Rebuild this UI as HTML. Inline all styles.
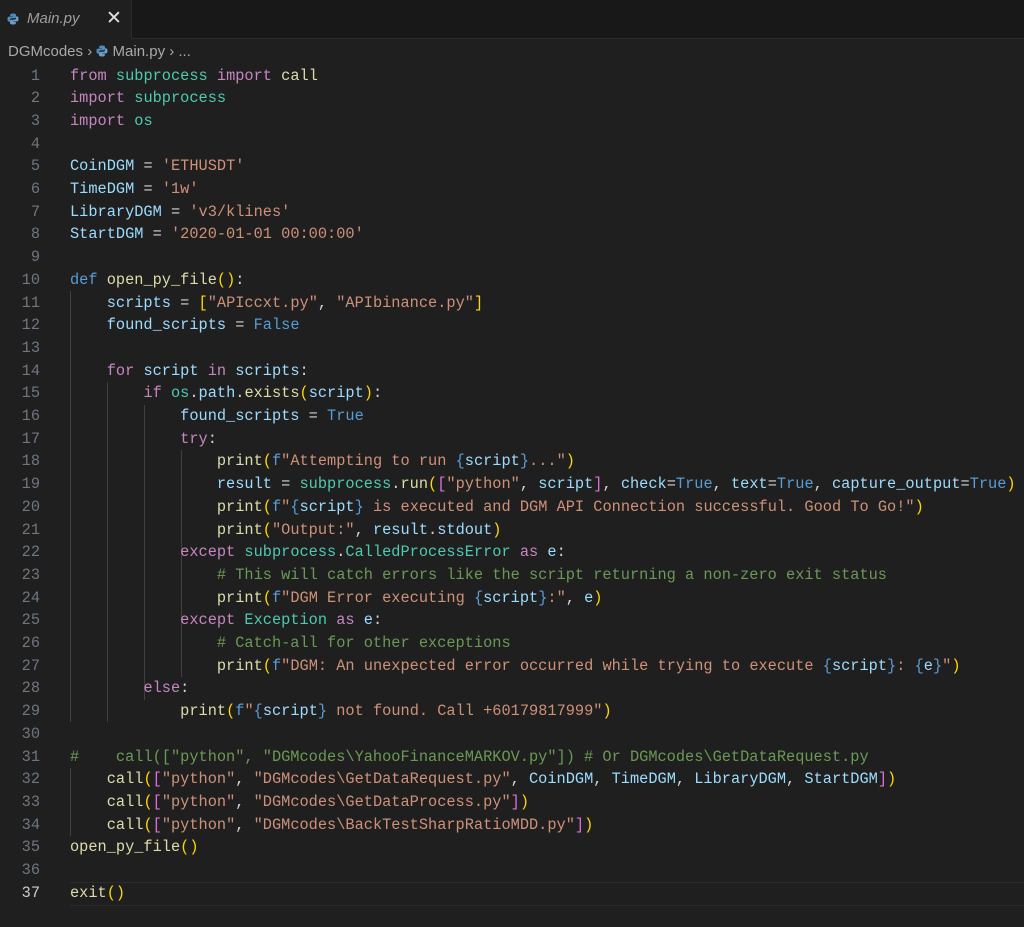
<!DOCTYPE html>
<html><head><meta charset="utf-8"><style>
body{margin:0;width:1024px;height:926px;background:#1f1f1f;overflow:hidden;font-family:"Liberation Sans",sans-serif;position:relative}
.tabbar{position:absolute;left:0;top:0;width:1024px;height:38px;background:#181818;border-bottom:1px solid #2b2b2b}
.tab{position:absolute;left:0;top:0;width:131px;height:39px;background:#1f1f1f;border-right:1px solid #2b2b2b}
.tab .n{position:absolute;left:27px;top:10px;font-size:15px;font-style:italic;color:#9d9d9d}
.tab .x{position:absolute;left:106px;top:7px;font-size:19px;color:#e0e0e0}
.crumb{position:absolute;left:8px;top:43px;font-size:15px;color:#a9a9a9}
.py{display:inline-block;width:12px;height:12px;position:relative;vertical-align:-1px}
.code{position:absolute;left:0;top:64.6px;font-family:"Liberation Mono",monospace;font-size:15.3px;line-height:22.7px;white-space:pre;color:#d4d4d4}
.ln{position:absolute;left:0;width:40px;text-align:right;color:#6e7681}
.l{position:absolute;left:70px}
.k{color:#c586c0}.b{color:#569cd6}.t{color:#4ec9b0}.f{color:#dcdcaa}.v{color:#9cdcfe}.s{color:#ce9178}.c{color:#6a9955}.y{color:#ffd700}.p{color:#da70d6}.q{color:#179fff}
.g{position:absolute;width:1px;background:#404040}
.cur{position:absolute;left:70px;top:881.5px;width:954px;height:22px;border-top:1px solid #2a2a2a;border-bottom:1px solid #2a2a2a}
</style></head><body>
<div class="tabbar"><div class="tab"><svg class="py" style="position:absolute;left:7px;top:13px" viewBox="0 0 12 12"><path d="M6 0.5C3 0.5 3.2 1.8 3.2 1.8V3.2H6.1V3.6H2C0.6 3.6 0.5 5 0.5 6.2S0.8 8.6 2 8.6H3V7.1C3 5.8 4 5.2 5 5.2H7.8C8.8 5.2 9 4.5 9 3.8V1.9C9 1 8 0.5 6 0.5Z" fill="#4b8bbe"/><path d="M6 11.5C9 11.5 8.8 10.2 8.8 10.2V8.8H5.9V8.4H10C11.4 8.4 11.5 7 11.5 5.8S11.2 3.4 10 3.4H9V4.9C9 6.2 8 6.8 7 6.8H4.2C3.2 6.8 3 7.5 3 8.2V10.1C3 11 4 11.5 6 11.5Z" fill="#6c9ec9"/></svg><span class="n">Main.py</span><span class="x">✕</span></div></div>
<div class="crumb">DGMcodes <span style="color:#a9a9a9">›</span> <svg class="py" viewBox="0 0 12 12"><path d="M6 0.5C3 0.5 3.2 1.8 3.2 1.8V3.2H6.1V3.6H2C0.6 3.6 0.5 5 0.5 6.2S0.8 8.6 2 8.6H3V7.1C3 5.8 4 5.2 5 5.2H7.8C8.8 5.2 9 4.5 9 3.8V1.9C9 1 8 0.5 6 0.5Z" fill="#4b8bbe"/><path d="M6 11.5C9 11.5 8.8 10.2 8.8 10.2V8.8H5.9V8.4H10C11.4 8.4 11.5 7 11.5 5.8S11.2 3.4 10 3.4H9V4.9C9 6.2 8 6.8 7 6.8H4.2C3.2 6.8 3 7.5 3 8.2V10.1C3 11 4 11.5 6 11.5Z" fill="#6c9ec9"/></svg> Main.py › ...</div>
<div class="cur"></div>
<!-- indent guides -->
<div class="g" style="left:70px;top:291px;height:431px"></div>
<div class="g" style="left:107px;top:382px;height:340px"></div>
<div class="g" style="left:144px;top:405px;height:295px"></div>
<div class="g" style="left:181px;top:450px;height:227px"></div>
<div class="g" style="left:144px;top:722px;height:0"></div>
<div class="g" style="left:70px;top:768px;height:68px"></div>
<div class="code">
<div class="ln" style="top:0">1</div><div class="l" style="top:0"><span class="k">from</span> <span class="t">subprocess</span> <span class="k">import</span> <span class="f">call</span></div>
<div class="ln" style="top:22.7px">2</div><div class="l" style="top:22.7px"><span class="k">import</span> <span class="t">subprocess</span></div>
<div class="ln" style="top:45.4px">3</div><div class="l" style="top:45.4px"><span class="k">import</span> <span class="t">os</span></div>
<div class="ln" style="top:68.1px">4</div>
<div class="ln" style="top:90.8px">5</div><div class="l" style="top:90.8px"><span class="v">CoinDGM</span> = <span class="s">'ETHUSDT'</span></div>
<div class="ln" style="top:113.5px">6</div><div class="l" style="top:113.5px"><span class="v">TimeDGM</span> = <span class="s">'1w'</span></div>
<div class="ln" style="top:136.2px">7</div><div class="l" style="top:136.2px"><span class="v">LibraryDGM</span> = <span class="s">'v3/klines'</span></div>
<div class="ln" style="top:158.9px">8</div><div class="l" style="top:158.9px"><span class="v">StartDGM</span> = <span class="s">'2020-01-01 00:00:00'</span></div>
<div class="ln" style="top:181.6px">9</div>
<div class="ln" style="top:204.3px">10</div><div class="l" style="top:204.3px"><span class="b">def</span> <span class="f">open_py_file</span><span class="y">()</span>:</div>
<div class="ln" style="top:227px">11</div><div class="l" style="top:227px">    <span class="v">scripts</span> = <span class="y">[</span><span class="s">"APIccxt.py"</span>, <span class="s">"APIbinance.py"</span><span class="y">]</span></div>
<div class="ln" style="top:249.7px">12</div><div class="l" style="top:249.7px">    <span class="v">found_scripts</span> = <span class="b">False</span></div>
<div class="ln" style="top:272.4px">13</div>
<div class="ln" style="top:295.1px">14</div><div class="l" style="top:295.1px">    <span class="k">for</span> <span class="v">script</span> <span class="k">in</span> <span class="v">scripts</span>:</div>
<div class="ln" style="top:317.8px">15</div><div class="l" style="top:317.8px">        <span class="k">if</span> <span class="t">os</span>.<span class="v">path</span>.<span class="f">exists</span><span class="y">(</span><span class="v">script</span><span class="y">)</span>:</div>
<div class="ln" style="top:340.5px">16</div><div class="l" style="top:340.5px">            <span class="v">found_scripts</span> = <span class="b">True</span></div>
<div class="ln" style="top:363.2px">17</div><div class="l" style="top:363.2px">            <span class="k">try</span>:</div>
<div class="ln" style="top:385.9px">18</div><div class="l" style="top:385.9px">                <span class="f">print</span><span class="y">(</span><span class="b">f</span><span class="s">"Attempting to run </span><span class="b">{</span><span class="v">script</span><span class="b">}</span><span class="s">..."</span><span class="y">)</span></div>
<div class="ln" style="top:408.6px">19</div><div class="l" style="top:408.6px">                <span class="v">result</span> = <span class="t">subprocess</span>.<span class="f">run</span><span class="y">(</span><span class="p">[</span><span class="s">"python"</span>, <span class="v">script</span><span class="p">]</span>, <span class="v">check</span>=<span class="b">True</span>, <span class="v">text</span>=<span class="b">True</span>, <span class="v">capture_output</span>=<span class="b">True</span><span class="y">)</span></div>
<div class="ln" style="top:431.3px">20</div><div class="l" style="top:431.3px">                <span class="f">print</span><span class="y">(</span><span class="b">f</span><span class="s">"</span><span class="b">{</span><span class="v">script</span><span class="b">}</span><span class="s"> is executed and DGM API Connection successful. Good To Go!"</span><span class="y">)</span></div>
<div class="ln" style="top:454px">21</div><div class="l" style="top:454px">                <span class="f">print</span><span class="y">(</span><span class="s">"Output:"</span>, <span class="v">result</span>.<span class="v">stdout</span><span class="y">)</span></div>
<div class="ln" style="top:476.7px">22</div><div class="l" style="top:476.7px">            <span class="k">except</span> <span class="t">subprocess</span>.<span class="t">CalledProcessError</span> <span class="k">as</span> <span class="v">e</span>:</div>
<div class="ln" style="top:499.4px">23</div><div class="l" style="top:499.4px">                <span class="c"># This will catch errors like the script returning a non-zero exit status</span></div>
<div class="ln" style="top:522.1px">24</div><div class="l" style="top:522.1px">                <span class="f">print</span><span class="y">(</span><span class="b">f</span><span class="s">"DGM Error executing </span><span class="b">{</span><span class="v">script</span><span class="b">}</span><span class="s">:"</span>, <span class="v">e</span><span class="y">)</span></div>
<div class="ln" style="top:544.8px">25</div><div class="l" style="top:544.8px">            <span class="k">except</span> <span class="t">Exception</span> <span class="k">as</span> <span class="v">e</span>:</div>
<div class="ln" style="top:567.5px">26</div><div class="l" style="top:567.5px">                <span class="c"># Catch-all for other exceptions</span></div>
<div class="ln" style="top:590.2px">27</div><div class="l" style="top:590.2px">                <span class="f">print</span><span class="y">(</span><span class="b">f</span><span class="s">"DGM: An unexpected error occurred while trying to execute </span><span class="b">{</span><span class="v">script</span><span class="b">}</span><span class="s">: </span><span class="b">{</span><span class="v">e</span><span class="b">}</span><span class="s">"</span><span class="y">)</span></div>
<div class="ln" style="top:612.9px">28</div><div class="l" style="top:612.9px">        <span class="k">else</span>:</div>
<div class="ln" style="top:635.6px">29</div><div class="l" style="top:635.6px">            <span class="f">print</span><span class="y">(</span><span class="b">f</span><span class="s">"</span><span class="b">{</span><span class="v">script</span><span class="b">}</span><span class="s"> not found. Call +60179817999"</span><span class="y">)</span></div>
<div class="ln" style="top:658.3px">30</div>
<div class="ln" style="top:681px">31</div><div class="l" style="top:681px"><span class="c">#    call(["python", "DGMcodes\YahooFinanceMARKOV.py"]) # Or DGMcodes\GetDataRequest.py</span></div>
<div class="ln" style="top:703.7px">32</div><div class="l" style="top:703.7px">    <span class="f">call</span><span class="y">(</span><span class="p">[</span><span class="s">"python"</span>, <span class="s">"DGMcodes\GetDataRequest.py"</span>, <span class="v">CoinDGM</span>, <span class="v">TimeDGM</span>, <span class="v">LibraryDGM</span>, <span class="v">StartDGM</span><span class="p">]</span><span class="y">)</span></div>
<div class="ln" style="top:726.4px">33</div><div class="l" style="top:726.4px">    <span class="f">call</span><span class="y">(</span><span class="p">[</span><span class="s">"python"</span>, <span class="s">"DGMcodes\GetDataProcess.py"</span><span class="p">]</span><span class="y">)</span></div>
<div class="ln" style="top:749.1px">34</div><div class="l" style="top:749.1px">    <span class="f">call</span><span class="y">(</span><span class="p">[</span><span class="s">"python"</span>, <span class="s">"DGMcodes\BackTestSharpRatioMDD.py"</span><span class="p">]</span><span class="y">)</span></div>
<div class="ln" style="top:771.8px">35</div><div class="l" style="top:771.8px"><span class="f">open_py_file</span><span class="y">()</span></div>
<div class="ln" style="top:794.5px">36</div>
<div class="ln" style="top:817.2px;color:#cccccc">37</div><div class="l" style="top:817.2px"><span class="f">exit</span><span class="y">()</span></div>
</div>
</body></html>
